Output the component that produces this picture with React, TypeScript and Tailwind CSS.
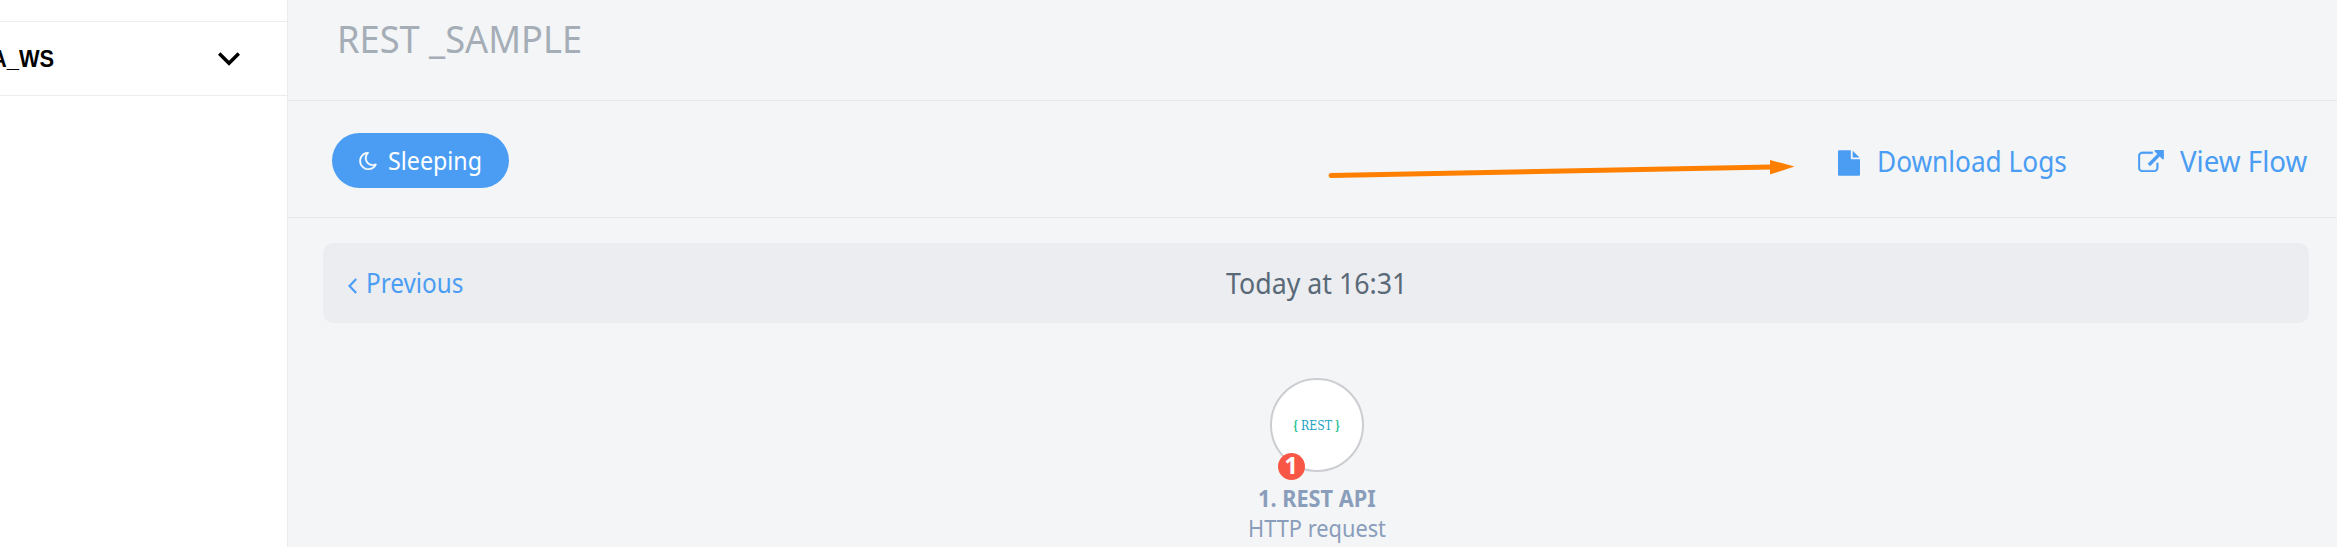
import type { ReactNode } from "react";

function Fit({ box, text, children }: { box: string; text: string; children: ReactNode }) {
  return (
    <span className={`inline-block shrink-0 whitespace-nowrap ${box}`}>
      <span className={`inline-block origin-left ${text}`}>{children}</span>
    </span>
  );
}

function MoonIcon() {
  return (
    <svg className="h-[18px] w-[18px] shrink-0" viewBox="128 128 1472 1536" fill="currentColor" stroke="currentColor" strokeWidth="30">
      <path d="M1390 1303q-54 9-110 9-182 0-337-90t-245-245-90-337q0-192 104-357-201 60-328.5 229t-127.5 384q0 130 51 248.5t136.5 204 204 136.5 248.5 51q144 0 273.5-61.5t220.5-171.5zm203-85q-94 203-283.5 324.5t-413.5 121.5q-156 0-298-61t-245-164-164-245-61-298q0-153 57.5-292.5t156-241.5 235.5-164.5 290-68.5q44-2 61 39 18 41-15 72-86 78-131.5 181.5t-45.5 218.5q0 148 73 273t198 198 273 73q118 0 228-51 41-18 72 13 14 14 17.5 34t-4.5 38z" />
    </svg>
  );
}

function FileIcon() {
  return (
    <svg className="mt-1 h-[26px] w-[22px] shrink-0" viewBox="128 0 1536 1792" fill="currentColor">
      <path d="M1152 512v-472q22 14 36 28l408 408q14 14 28 36h-472zm-128 32q0 40 28 68t68 28h544v1056q0 40-28 68t-68 28h-1344q-40 0-68-28t-28-68v-1600q0-40 28-68t68-28h800v544z" />
    </svg>
  );
}

function ExternalLinkIcon() {
  return (
    <svg className="h-[22px] w-[26px] shrink-0" viewBox="0 0 1792 1536" fill="currentColor" stroke="currentColor" strokeWidth="20">
      <path d="M1408 928v320q0 119-84.5 203.5t-203.5 84.5h-832q-119 0-203.5-84.5t-84.5-203.5v-832q0-119 84.5-203.5t203.5-84.5h704q14 0 23 9t9 23v64q0 14-9 23t-23 9h-704q-66 0-113 47t-47 113v832q0 66 47 113t113 47h832q66 0 113-47t47-113v-320q0-14 9-23t23-9h64q14 0 23 9t9 23zm384-864v512q0 26-19 45t-45 19-45-19l-176-176-652 652q-10 10-23 10t-23-10l-114-114q-10-10-10-23t10-23l652-652-176-176q-19-19-19-45t19-45 45-19h512q26 0 45 19t19 45z" />
    </svg>
  );
}

function Sidebar() {
  return (
    <aside className="w-[288px] shrink-0 overflow-hidden border-r border-[#ececee] bg-white pt-[21px]">
      <div className="flex h-[75px] items-center justify-between border-y border-[#ececee] pr-[47px] font-['Liberation_Sans',sans-serif] text-2xl leading-none font-bold text-black">
        <Fit box="-ml-[9px] w-[63px]" text="scale-x-[0.91]">A_WS</Fit>
        <svg className="mt-px h-[14px] w-[22px]" viewBox="0 0 22 14" fill="none" stroke="black" strokeWidth="3.6">
          <path d="M1.2 1.5 11 11.2 20.8 1.5" />
        </svg>
      </div>
    </aside>
  );
}

function FlowStep() {
  return (
    <div className="flex flex-col items-center pt-[55px] pl-px text-2xl text-[#8a9dba]">
      <div className="relative flex h-[94px] w-[94px] items-center justify-center rounded-full border-2 border-[#cbcdd0] bg-white font-['DejaVu_Serif',serif] text-[13px] leading-none">
        <div className="flex items-center gap-[3px]">
          <Fit box="w-[5px]" text="scale-x-[0.6] font-bold text-[#1fbf8f]">{"{"}</Fit>
          <Fit box="w-[31px]" text="scale-x-[0.84] text-[#1a9fc4]">REST</Fit>
          <Fit box="w-[5px]" text="scale-x-[0.6] font-bold text-[#1fbf8f]">{"}"}</Fit>
        </div>
        <span className="absolute -bottom-[10px] left-[6px] flex h-[27px] w-[27px] items-center justify-center rounded-full bg-[#f95745] pb-[3px] font-['Noto_Sans',sans-serif] text-2xl leading-none font-bold text-white">
          1
        </span>
      </div>
      <div className="mt-[11px] h-[30px] leading-[30px] font-bold">
        <Fit box="w-[117px]" text="scale-x-[0.905]">1. REST API</Fit>
      </div>
      <div className="h-[30px] leading-[30px]">
        <Fit box="w-[137px]" text="scale-x-[0.908]">HTTP request</Fit>
      </div>
    </div>
  );
}

export default function App() {
  return (
    <div className="flex h-[547px] w-full overflow-hidden bg-[#f3f5f7] font-['Noto_Sans',sans-serif]">
      <Sidebar />
      <main className="min-w-0 flex-1">
        <header className="h-[101px] border-b border-[#e6e8ea] pl-[49px] text-[38px] leading-[76px] text-[#a5adb6]">
          <Fit box="w-[245px]" text="scale-x-[0.953]">REST _SAMPLE</Fit>
        </header>
        <div className="relative flex h-[117px] items-center justify-between border-b border-[#e6e8ea] pt-[3px] pr-7 pl-11 text-[#4a9df3]">
          <div className="flex h-[55px] w-[177px] items-center gap-[11px] rounded-full bg-[#4a9df3] pl-[27px] text-[25px] text-white">
            <MoonIcon />
            <Fit box="w-[93px]" text="scale-x-[0.93]">Sleeping</Fit>
          </div>
          <div className="flex items-center text-[29px]">
            <FileIcon />
            <Fit box="ml-[17px] w-[188px]" text="scale-x-[0.904]">Download Logs</Fit>
            <div className="ml-[73px] flex items-center gap-4">
              <ExternalLinkIcon />
              <Fit box="w-[129px]" text="scale-x-[0.955]">View Flow</Fit>
            </div>
          </div>
          <svg className="absolute top-[54px] left-[1037px] h-6 w-[474px]" viewBox="0 0 474 24" fill="#ff8000">
            <path d="M6 20.5 446 12" stroke="#ff8000" strokeWidth="5" strokeLinecap="round" />
            <path d="M445 5v14.5l24.5-8z" />
          </svg>
        </div>
        <div className="pt-[25px] pr-7 pl-[35px]">
          <div className="grid h-20 grid-cols-[1fr_auto_1fr] items-center rounded-[10px] bg-[#ebedf0]">
            <div className="flex items-center gap-[9px] pt-px pl-[25px] text-[27px] text-[#4a9df3]">
              <svg className="mt-1 h-4 w-[9px]" viewBox="0 0 9 16" fill="none" stroke="currentColor" strokeWidth="2.2">
                <path d="M8.2 1 1.5 8l6.7 7" />
              </svg>
              <Fit box="w-[98px]" text="scale-x-[0.9]">Previous</Fit>
            </div>
            <div className="text-[29px] text-[#5a6978]">
              <Fit box="w-[180px]" text="scale-x-[0.923]">Today at 16:31</Fit>
            </div>
            <div />
          </div>
          <FlowStep />
        </div>
      </main>
    </div>
  );
}
